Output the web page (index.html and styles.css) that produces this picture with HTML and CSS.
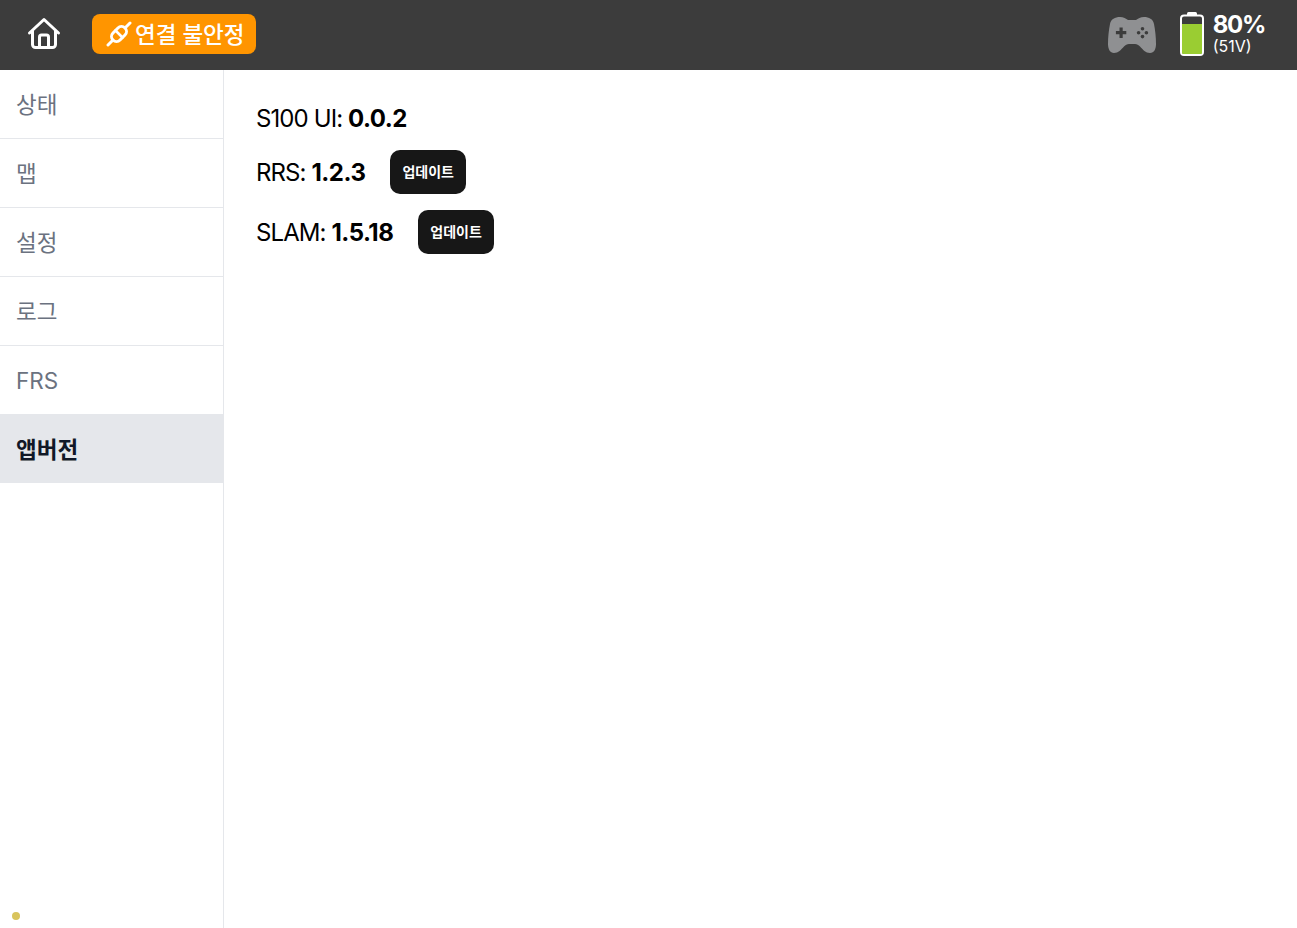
FILE: index.html
```html
<!DOCTYPE html>
<html lang="ko">
<head>
<meta charset="utf-8">
<title>앱버전</title>
<link rel="stylesheet" href="styles.css">
</head>
<body>
<header class="topbar">
  <div class="topbar-left">
    <svg class="home-icon" viewBox="0 0 34 34" fill="none" stroke="#fff" stroke-width="3" stroke-linejoin="round" stroke-linecap="round"><path d="M2.500 16 17 2.500 31.500 16"/><path d="M5.500 14v13.500a3 3 0 0 0 3 3h17a3 3 0 0 0 3-3V14"/><path d="M12.500 30V20a2 2 0 0 1 2-2h5a2 2 0 0 1 2 2v10"/></svg>
    <div class="status-pill">
      <svg class="plug-icon" viewBox="0 0 26 26" fill="none" stroke="#fff" stroke-linecap="round" stroke-linejoin="round"><g stroke-width="3"><path d="M2 24l4.500-4.500"/><path d="M19.500 6.500 24 2"/><rect x="4.500" y="8" width="17" height="10" rx="5" transform="rotate(-45 13 13)"/></g><path d="M9.500 9.500l7 7" stroke-width="2.600"/></svg>
      <span>연결 불안정</span>
    </div>
  </div>
  <div class="topbar-right">
    <svg class="pad-icon" viewBox="0 0 48 36"><path fill="#8f9092" d="M12 0c3.500 0 6 1.500 8 3h8c2-1.500 4.500-3 8-3 5 0 9 2 10 7 1.200 6 2 13 2 20 0 5-2 9-6 9-4.500 0-7-3.500-10-6.500-1.500-1.500-3-2.500-5-2.500h-6c-2 0-3.500 1-5 2.500-3 3-5.500 6.500-10 6.500-4 0-6-4-6-9 0-7 .8-14 2-20C3 2 7 0 12 0z"/><path fill="#3c3c3c" d="M11.500 10.500h3.200v3.600h3.600v3.200h-3.600v3.600h-3.200v-3.600H7.900v-3.200h3.600z"/><circle cx="34.500" cy="11.800" r="1.800" fill="#3c3c3c"/><circle cx="34.500" cy="19.600" r="1.800" fill="#3c3c3c"/><circle cx="30.600" cy="15.700" r="1.800" fill="#3c3c3c"/><circle cx="38.400" cy="15.700" r="1.800" fill="#3c3c3c"/></svg>
    <svg class="battery-icon" viewBox="0 0 24 44"><rect x="7" y="0" width="10" height="5" rx="1.500" fill="#fff"/><rect x="1" y="3.500" width="22" height="39.500" rx="3" fill="#3c3c3c" stroke="#fff" stroke-width="2"/><path fill="#9acd32" d="M2 12h20v28.500a1.500 1.500 0 0 1-1.500 1.500h-17A1.500 1.500 0 0 1 2 40.500z"/></svg>
    <div class="battery-text">
      <div class="battery-percent">80%</div>
      <div class="battery-volt">(51V)</div>
    </div>
  </div>
</header>
<div class="layout">
  <nav class="sidebar">
    <a class="nav-item">상태</a>
    <a class="nav-item">맵</a>
    <a class="nav-item">설정</a>
    <a class="nav-item">로그</a>
    <a class="nav-item latin">FRS</a>
    <a class="nav-item active">앱버전</a>
    <span class="dot"></span>
  </nav>
  <main class="content">
    <div class="version-row first"><span>S100 UI: <b>0.0.2</b></span></div>
    <div class="version-row"><span>RRS: <b>1.2.3</b></span><button class="update-btn">업데이트</button></div>
    <div class="version-row"><span>SLAM: <b>1.5.18</b></span><button class="update-btn">업데이트</button></div>
  </main>
</div>
</body>
</html>
```
FILE: styles.css
```css
* { box-sizing: border-box; }
html, body { margin: 0; height: 100%; }
body {
  font-family: Inter, "Noto Sans CJK KR", sans-serif;
  background: #fff;
  color: #000;
  display: flex;
  flex-direction: column;
  height: 928px;
  overflow: hidden;
}
.topbar {
  height: 70px;
  flex: none;
  background: #3c3c3c;
  display: flex;
  align-items: center;
  justify-content: space-between;
  padding: 0 32px 2px 27px;
}
.topbar-left, .topbar-right { display: flex; align-items: center; }
.home-icon { width: 34px; height: 34px; margin-right: 31px; }
.status-pill {
  display: flex;
  align-items: center;
  gap: 3px;
  height: 40px;
  width: 164px;
  padding: 0 0 0 14px;
  background: #ff9500;
  border-radius: 8px;
  color: #fff;
  font-size: 22.5px;
  font-weight: 500;
}
.status-pill span { margin-top: -3px; }
.plug-icon { width: 26px; height: 26px; flex: none; }
.pad-icon { width: 48px; height: 36px; margin: 2px 24px 0 0; }
.battery-icon { width: 24px; height: 44px; margin-right: 9px; }
.battery-text { color: #fff; }
.battery-percent { font-size: 24px; font-weight: 700; line-height: 24px; letter-spacing: -1.3px; }
.battery-volt { font-size: 16px; line-height: 18px; white-space: nowrap; }
.layout { flex: 1; display: flex; min-height: 0; }
.sidebar {
  position: relative;
  width: 224px;
  flex: none;
  border-right: 1px solid #e5e7eb;
}
.nav-item {
  display: flex;
  align-items: center;
  height: 69px;
  padding: 0 16px 2px;
  font-size: 22.5px;
  color: #6b7280;
  border-bottom: 1px solid #e5e7eb;
}
.nav-item.latin { padding: 0 16px; }
.nav-item.active {
  background: #e5e7eb;
  color: #111827;
  font-weight: 600;
  border-bottom: 0;
  height: 68px;
}
.dot {
  position: absolute;
  left: 12px;
  bottom: 8px;
  width: 8px;
  height: 8px;
  border-radius: 50%;
  background: #d9c45c;
}
.content { flex: 1; padding: 32px; }
.version-row {
  display: flex;
  align-items: center;
  gap: 24.500px;
  font-size: 24px;
  height: 44px;
  margin-bottom: 16px;
  letter-spacing: -0.9px;
}
.version-row.first { height: 32px; margin-bottom: 16px; }
.version-row b { font-weight: 700; letter-spacing: -0.5px; }
.update-btn {
  height: 44px;
  width: 76.500px;
  padding: 0 0 2px;
  border: 0;
  border-radius: 10px;
  background: #171717;
  color: #fff;
  font: 700 14px Inter, "Noto Sans CJK KR", sans-serif;
}
```
